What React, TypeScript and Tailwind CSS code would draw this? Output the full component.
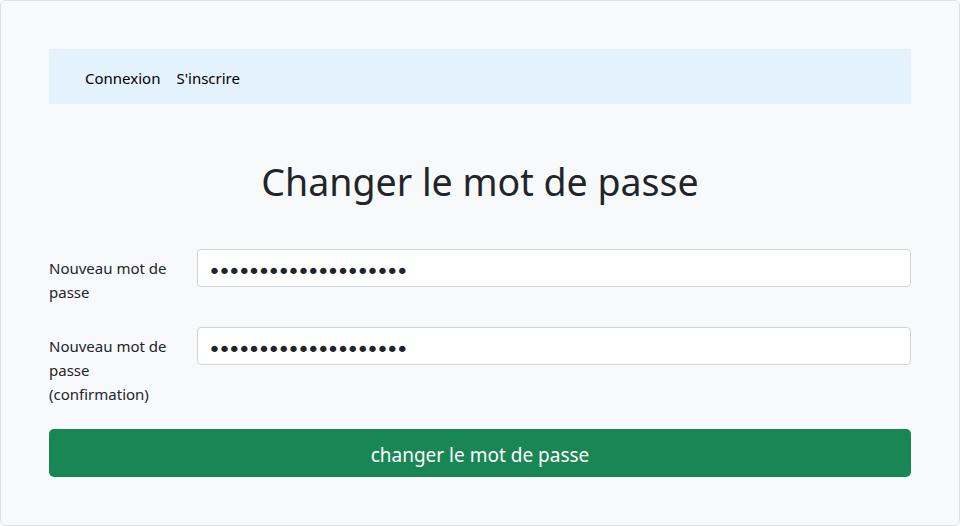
import React from "react";

export default function App() {
  const font = { fontFamily: '"Noto Sans", "Open Sans", sans-serif' };
  const inputCls =
    "flex-1 h-[38px] bg-white border border-[#ced4da] rounded-[4px] pl-[10px] pr-3 pt-[6px] pb-0 text-[22px] leading-[30px] text-[#212529] outline-none tracking-[-3.1px] font-['DejaVu_Sans',sans-serif]";
  return (
    <div
      className="w-[960px] h-[526px] border border-[#dee2e6] rounded-[5px] bg-[#f8f9fa] p-12 text-[#212529]"
      style={font}
    >
      <nav className="h-[55px] bg-[#e3f2fd] flex items-center pl-9 pt-1 gap-4 text-[15px] text-black">
        <span>Connexion</span>
        <span>S'inscrire</span>
      </nav>
      <h1 className="mt-[54px] h-[48px] text-center text-[37.5px] leading-[48px] font-normal">
        Changer le mot de passe
      </h1>
      <form className="mt-[43px]">
        <div className="flex mb-4">
          <label className="w-[148px] shrink-0 py-[7px] pr-3 text-[15px] leading-6">
            Nouveau mot de
            <br />
            passe
          </label>
          <input type="password" readOnly value="aaaaaaaaaaaaaaaaaaaa" className={inputCls} />
        </div>
        <div className="flex mb-4">
          <label className="w-[148px] shrink-0 py-[7px] pr-3 text-[15px] leading-6">
            Nouveau mot de
            <br />
            passe
            <br />
            (confirmation)
          </label>
          <input type="password" readOnly value="aaaaaaaaaaaaaaaaaaaa" className={inputCls} />
        </div>
        <button
          type="button"
          className="w-full h-[48px] bg-[#198754] text-white rounded-[5px] text-[19px] pt-1"
        >
          changer le mot de passe
        </button>
      </form>
    </div>
  );
}
